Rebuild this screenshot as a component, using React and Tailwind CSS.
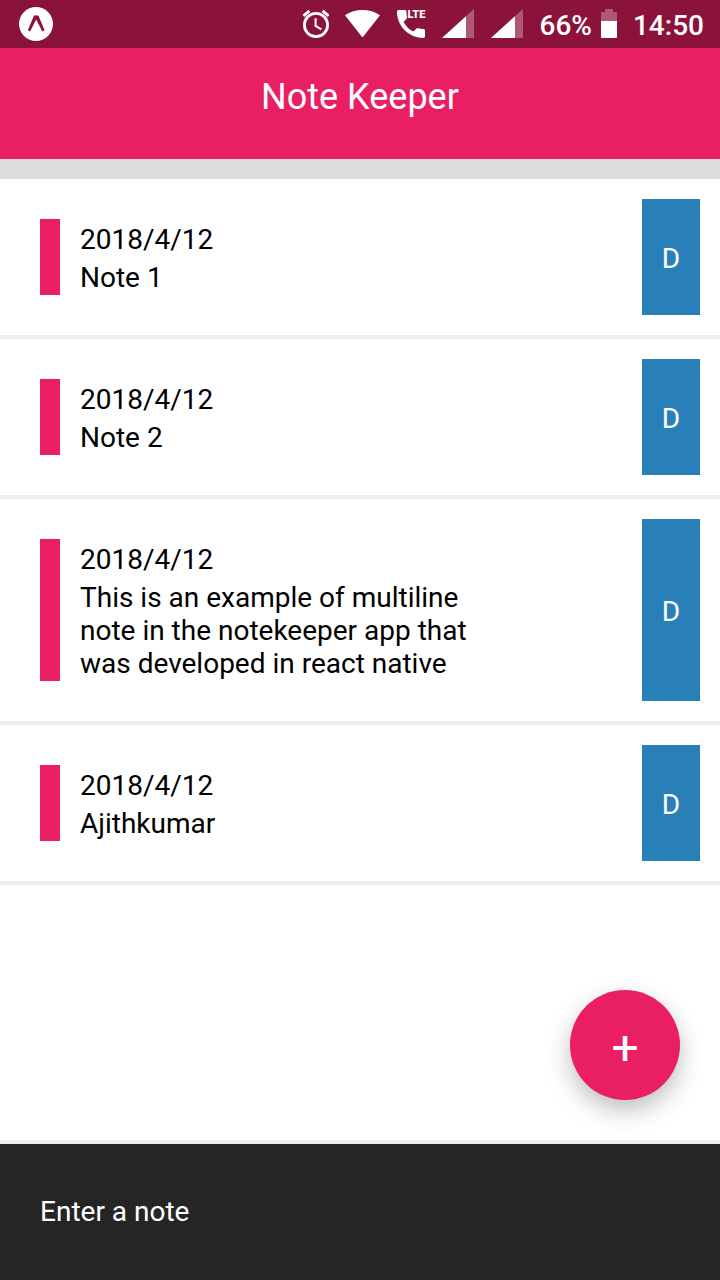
const notes = [
  { id: 1, date: '2018/4/12', text: 'Note 1' },
  { id: 2, date: '2018/4/12', text: 'Note 2' },
  {
    id: 3,
    date: '2018/4/12',
    text: 'This is an example of multiline note in the notekeeper app that was developed in react native',
  },
  { id: 4, date: '2018/4/12', text: 'Ajithkumar' },
];

function ExpoIcon() {
  return (
    <svg className="size-[34px]" viewBox="0 0 34 34" aria-hidden="true">
      <circle cx="17" cy="17" r="17" fill="#fff" />
      <path
        d="M15 8.6h4.4L25.4 22.8Q25 24.6 23.2 24.2L17.2 12.4 11.2 24.2Q9.4 24.6 9 22.8Z"
        fill="#8b1339"
      />
    </svg>
  );
}

function AlarmIcon() {
  return (
    <svg className="h-[30px] w-7" viewBox="0 0 28 30" fill="none" stroke="#fff" aria-hidden="true">
      <circle cx="15" cy="16" r="11.6" strokeWidth="2.8" />
      <path d="M2.4 6.9 8.4 1.9M27.6 6.9 21.6 1.9" strokeWidth="2.8" />
      <path d="M14.6 9.3V16.9L20.4 20.3" strokeWidth="2.1" />
    </svg>
  );
}

function WifiIcon() {
  return (
    <svg className="h-[30px] w-[35px]" viewBox="0 0 35 30" fill="#fff" aria-hidden="true">
      <path d="M0 6.2C10-.7 25-.7 35 6.2L18.3 27.4Q17.5 28.4 16.7 27.4Z" />
    </svg>
  );
}

function CallIcon() {
  return (
    <svg className="h-[30px] w-[30px]" viewBox="-1 -1 30 30" fill="#fff" aria-hidden="true">
      <path
        d="M1.5 0H8Q9.3 0 9.4 1.4 9.5 4.5 10 7 10.2 8.2 9.4 9L6.6 12Q10 18.4 16.2 21.6L19.2 18.7Q20 17.9 21.2 18.3 23.6 19 26.6 19.1 28 19.2 28 20.6V26.6Q28 28 26.6 28C12 28 0 16.4 0 1.5Q0 0 1.5 0Z"
      />
      <text x="10.5" y="8" fontSize="11" fontWeight="900" fontFamily="Roboto, sans-serif" stroke="#8b1339" strokeWidth="1.6" paintOrder="stroke">
        LTE
      </text>
    </svg>
  );
}

function SignalIcon() {
  return (
    <svg className="h-[30px] w-[33px]" viewBox="0 0 33 30" fill="#fff" aria-hidden="true">
      <path d="M0 29 32 0V29Z" opacity=".3" />
      <path d="M0 29 24 7.2V29Z" />
    </svg>
  );
}

function BatteryIcon() {
  return (
    <svg className="h-[30px] w-4" viewBox="0 0 16 30" fill="#fff" aria-hidden="true">
      <path d="M4 0h8v3h3q1 0 1 1v8H0V4q0-1 1-1h3Z" opacity=".3" />
      <path d="M0 12h16v16q0 1-1 1H1q-1 0-1-1Z" />
    </svg>
  );
}

function StatusBar() {
  return (
    <div className="flex h-12 items-center justify-between bg-[#8b1339] pl-[19px] pr-4 text-[28px] leading-[33px] font-medium text-white">
      <ExpoIcon />
      <div className="flex items-center gap-4">
        <AlarmIcon />
        <WifiIcon />
        <CallIcon />
        <SignalIcon />
        <SignalIcon />
        <div className="flex items-center gap-[9px]">
          <span className="pt-0.5">66%</span>
          <BatteryIcon />
        </div>
        <span className="pt-0.5">14:50</span>
      </div>
    </div>
  );
}

function Note({ note }) {
  return (
    <li className="flex border-b-4 border-[#ededed] p-5">
      <div className="flex flex-1 py-5 pl-5">
        <div className="w-full max-w-[440px] border-l-20 border-[#e91e63] pl-5">
          <p className="pt-1 pb-px">{note.date}</p>
          <p className="pt-1 pb-px">{note.text}</p>
        </div>
      </div>
      <button type="button" aria-label={`Delete ${note.text}`} className="bg-[#2980b9] px-5 pt-0.5 text-white">
        D
      </button>
    </li>
  );
}

export default function App() {
  return (
    <div className="flex min-h-screen flex-col bg-white font-['Roboto',sans-serif] text-[28px] leading-[33px] text-black">
      <StatusBar />
      <header className="border-b-20 border-[#ddd] bg-[#e91e63] pt-7 pb-[41px] text-center text-white">
        <h1 className="text-[36px] leading-[42px]">Note Keeper</h1>
      </header>
      <main className="relative flex-1 pb-40">
        <ul>
          {notes.map((note) => (
            <Note key={note.id} note={note} />
          ))}
        </ul>
        <button
          type="submit"
          form="note-form"
          aria-label="Add note"
          className="absolute right-10 bottom-10 flex size-[110px] items-center justify-center rounded-full bg-[#e91e63] pt-1.5 text-[48px] leading-[56px] text-white shadow-[0_10px_24px_rgba(0,0,0,0.26)]"
        >
          +
        </button>
      </main>
      <form
        id="note-form"
        onSubmit={(event) => event.preventDefault()}
        className="border-t-4 border-[#ededed] bg-[#252525]"
      >
        <input
          type="text"
          aria-label="Enter a note"
          placeholder="Enter a note"
          className="block h-[136px] w-full bg-transparent px-10 pb-0.5 text-white outline-none placeholder:text-white placeholder:opacity-100"
        />
      </form>
    </div>
  );
}
